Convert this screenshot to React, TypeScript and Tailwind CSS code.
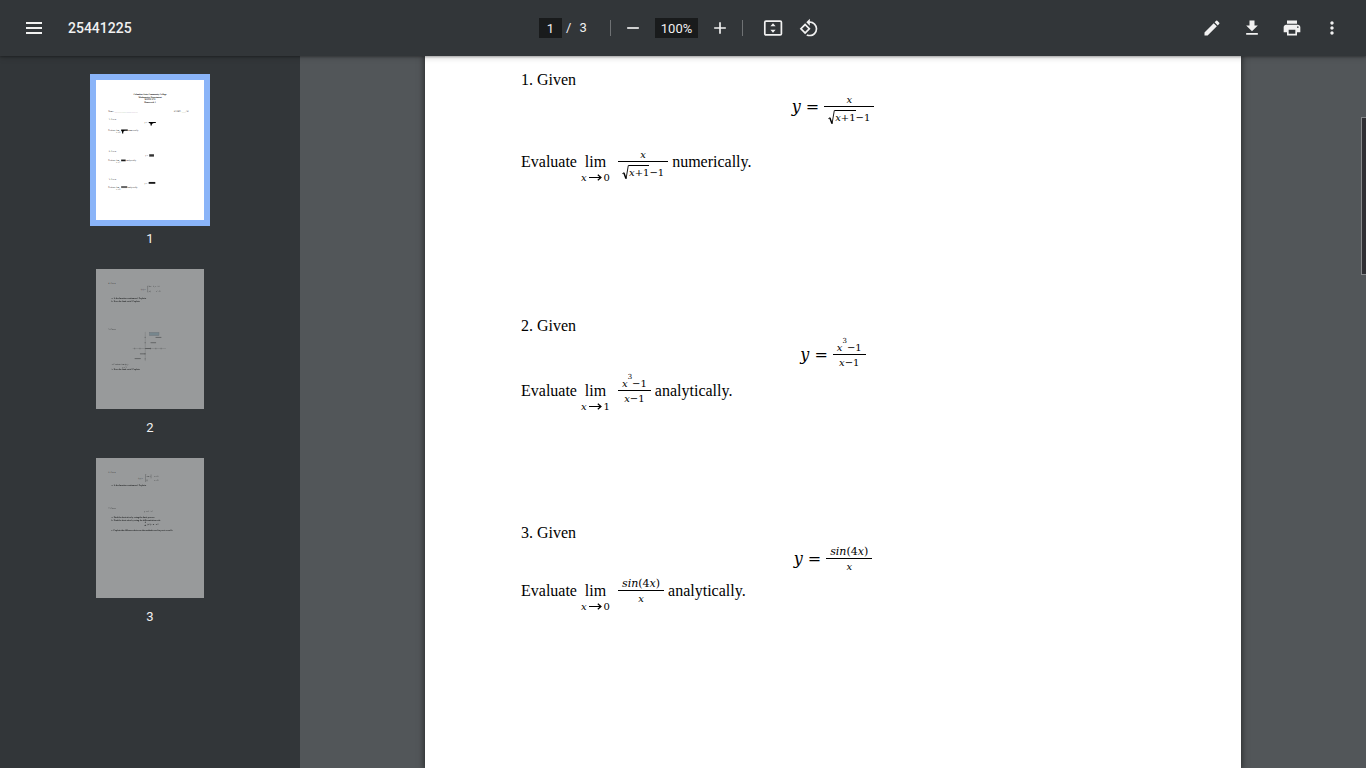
import type { ReactNode } from "react";
import {
  MdAdd,
  MdEdit,
  MdGetApp,
  MdMoreVert,
  MdPrint,
  MdRemove,
  MdRotate90DegreesCcw,
} from "react-icons/md";

function IconButton({ label, children, wide = false }: { label: string; children: ReactNode; wide?: boolean }) {
  return (
    <button
      type="button"
      aria-label={label}
      className={`flex h-8 items-center justify-center rounded-full hover:bg-white/10 ${wide ? "w-9" : "w-8"}`}
    >
      {children}
    </button>
  );
}

function MenuIcon() {
  return (
    <svg width="16" height="12" viewBox="0 0 16 12" fill="currentColor" aria-hidden="true">
      <path d="M0 0h16v2H0zM0 5h16v2H0zM0 10h16v2H0z" />
    </svg>
  );
}

function FitPageIcon() {
  return (
    <svg width="20" height="20" viewBox="0 0 20 20" fill="currentColor" aria-hidden="true">
      <rect x="1.8" y="3.1" width="16.6" height="13.8" rx="1.2" fill="none" stroke="currentColor" strokeWidth="1.7" />
      <path d="M10 5.2l2.6 3H7.4zM10 14.8l2.6-3H7.4z" />
    </svg>
  );
}

function Divider() {
  return <span className="h-4 w-px bg-white/30" />;
}

function Toolbar() {
  return (
    <header className="relative z-10 grid h-14 shrink-0 grid-cols-[1fr_auto_1fr] items-center bg-[#323639] text-sm text-[#f1f1f1] shadow-[0_1px_2px_rgba(0,0,0,0.3),0_2px_6px_rgba(0,0,0,0.15)]">
      <div className="flex items-center gap-4 pl-4">
        <IconButton label="Menu" wide>
          <MenuIcon />
        </IconButton>
        <h1 className="font-medium">25441225</h1>
      </div>

      <div className="flex items-center">
        <input
          aria-label="Page number"
          defaultValue="1"
          className="h-5 w-[23px] bg-[#191b1c] text-center text-[13px] outline-none"
        />
        <span className="flex w-12 gap-2 pl-1 text-[13px]">
          <span>/</span>
          <span>3</span>
        </span>
        <Divider />
        <div className="flex items-center gap-1 px-1">
          <IconButton label="Zoom out" wide>
            <MdRemove size={20} />
          </IconButton>
          <input
            aria-label="Zoom level"
            defaultValue="100%"
            className="h-5 w-[43px] bg-[#191b1c] text-center text-[13px] outline-none"
          />
          <IconButton label="Zoom in" wide>
            <MdAdd size={20} />
          </IconButton>
        </div>
        <Divider />
        <div className="flex items-center pl-3">
          <IconButton label="Fit to page" wide>
            <FitPageIcon />
          </IconButton>
          <IconButton label="Rotate counterclockwise" wide>
            <MdRotate90DegreesCcw size={20} />
          </IconButton>
        </div>
      </div>

      <div className="flex items-center justify-end gap-2 pr-[18px]">
        <IconButton label="Annotate">
          <MdEdit size={20} />
        </IconButton>
        <IconButton label="Download">
          <MdGetApp size={20} />
        </IconButton>
        <IconButton label="Print">
          <MdPrint size={20} />
        </IconButton>
        <IconButton label="More actions">
          <MdMoreVert size={20} />
        </IconButton>
      </div>
    </header>
  );
}

/* Miniature page previews, drawn in letter-size page units. */

function PageOnePreview() {
  return (
    <>
      <g textAnchor="middle" fontWeight="bold">
        <text x="408" y="113">Columbus State Community College</text>
        <text x="408" y="136">Mathematics Department</text>
        <text x="408" y="152">MATH 1151</text>
        <text x="408" y="172">Homework 1</text>
      </g>
      <text x="93" y="241">Name: ______________________</text>
      <text x="587" y="241">SCORE: ____/30</text>
      <text x="96" y="302">1. Given</text>
      <text x="366" y="326">y =</text>
      <path d="M398 316h54v8h-16l-14 8v12h-10v-14l-14-8z" />
      <text x="93" y="385">Evaluate lim</text>
      <text x="152" y="402">x→0</text>
      <path d="M190 373h50v9h-24l-10 8v14h-9v-14l-7-8z" />
      <text x="243" y="385">numerically.</text>
      <text x="96" y="545">2. Given</text>
      <text x="372" y="575">y =</text>
      <path d="M402 560h36v18h-36z" opacity="0.8" />
      <text x="93" y="612">Evaluate lim</text>
      <text x="152" y="629">x→1</text>
      <path d="M190 600h34v13h-34z" opacity="0.9" />
      <text x="228" y="612">analytically.</text>
      <text x="96" y="755">3. Given</text>
      <text x="366" y="782">y =</text>
      <path d="M398 769h50v14h-50z" opacity="0.9" />
      <text x="93" y="815">Evaluate lim</text>
      <text x="152" y="832">x→0</text>
      <path d="M190 800h46v15h-46z" opacity="0.6" />
      <text x="238" y="815">analytically.</text>
    </>
  );
}

function PageTwoPreview() {
  return (
    <>
      <text x="93" y="113">4. Given</text>
      <text x="338" y="156">f(x) =</text>
      <path d="M396 128h-6v46h6" fill="none" stroke="black" strokeWidth="3" opacity="0.6" />
      <text x="398" y="138">2x + 3,   x ≤ 0</text>
      <text x="398" y="172">x², </text>
      <text x="452" y="172">x &gt; 0</text>
      <g fontWeight="bold">
        <text x="118" y="227">a.   Is the function continuous? Explain.</text>
        <text x="118" y="249">b.   Does the limit exist? Explain.</text>
      </g>
      <text x="93" y="461">5. Given</text>
      <rect x="404" y="478" width="72" height="24" fill="#6ba5c0" stroke="#345" strokeWidth="3" opacity="0.45" />
      <path d="M372 474v221M277 600h252" fill="none" stroke="black" strokeWidth="2" opacity="0.5" />
      <path
        d="M292 594v12M332 594v12M412 594v12M452 594v12M492 594v12M366 516h12M366 556h12M366 640h12M366 678h12"
        stroke="black"
        strokeWidth="3"
        opacity="0.6"
      />
      <path d="M292 676h46M332 640h40M372 600h40M412 556h42M450 516h44" stroke="black" strokeWidth="4" opacity="0.8" />
      <text x="118" y="726">a.   Evaluate lim f(x)</text>
      <text x="198" y="744">x→1</text>
      <text x="118" y="763" fontWeight="bold">b.   Does the limit exist? Explain.</text>
    </>
  );
}

function PageThreePreview() {
  return (
    <>
      <text x="93" y="113">6. Given</text>
      <text x="318" y="156">f(x) =</text>
      <path d="M380 124h-6v54h6M416 124v30" fill="none" stroke="black" strokeWidth="3" opacity="0.6" />
      <text x="382" y="144">sin x</text>
      <text x="438" y="144">x ≠ 0</text>
      <text x="382" y="174">0,</text>
      <text x="438" y="174">x = 0</text>
      <text x="118" y="212" fontWeight="bold">a.   Is the function continuous? Explain.</text>
      <text x="93" y="385">7. Given</text>
      <text x="363" y="410">y = x² + x³</text>
      <g fontWeight="bold">
        <text x="118" y="454">a.   Find the derivative by using the limit process.</text>
        <text x="118" y="476">b.   Find the derivative by using the differentiation rule.</text>
        <text x="368" y="494">d</text>
        <text x="364" y="516">dx</text>
        <text x="390" y="504">(xⁿ) = n · xⁿ⁻¹</text>
        <text x="118" y="552">c.   Explain the difference between the methods used in parts a and b.</text>
      </g>
    </>
  );
}

function Thumbnail({ page, active = false, children }: { page: number; active?: boolean; children: ReactNode }) {
  return (
    <li className="flex flex-col items-center">
      <a
        href={`#page-${page}`}
        aria-label={`Page ${page}`}
        className={`block border-6 ${active ? "border-[#8ab4f8]" : "border-transparent"}`}
      >
        <svg
          viewBox="0 0 816 1056"
          preserveAspectRatio="none"
          fontSize="16"
          textRendering="geometricPrecision"
          aria-hidden="true"
          className={`h-[140px] w-[108px] font-['Liberation_Serif',serif] ${active ? "" : "opacity-50"}`}
        >
          <rect width="816" height="1056" fill="white" />
          {children}
        </svg>
      </a>
      <span className="text-[13px] leading-[26px] text-[#f1f1f1]">{page}</span>
    </li>
  );
}

function Sidebar() {
  return (
    <aside className="w-[300px] shrink-0 overflow-hidden bg-[#323639] pt-[18px]">
      <ol className="flex flex-col gap-[11px]">
        <Thumbnail page={1} active>
          <PageOnePreview />
        </Thumbnail>
        <Thumbnail page={2}>
          <PageTwoPreview />
        </Thumbnail>
        <Thumbnail page={3}>
          <PageThreePreview />
        </Thumbnail>
      </ol>
    </aside>
  );
}

/* Worksheet math */

function Fraction({ top, bottom }: { top: ReactNode; bottom: ReactNode }) {
  return (
    <span className="inline-flex flex-col text-center font-['DejaVu_Serif',serif] text-[10px] leading-[14px]">
      <span className="h-[14px] border-b border-black px-1">{top}</span>
      <span className="h-[14px] px-1 leading-4">{bottom}</span>
    </span>
  );
}

function Radical({ children }: { children: ReactNode }) {
  return (
    <span className="inline-flex">
      <svg width="7" height="15" viewBox="0 0 7 15" fill="none" stroke="black" aria-hidden="true">
        <path d="M0.4 8.6L1.9 7.8" strokeWidth="0.9" />
        <path d="M1.8 7.8L4 13.6" strokeWidth="1.5" />
        <path d="M4 14L6.3 0.5H7" strokeWidth="0.9" />
      </svg>
      <span className="border-t border-black leading-[13px]">{children}</span>
    </span>
  );
}

function RootFraction() {
  return (
    <Fraction
      top={<i>x</i>}
      bottom={
        <span className="flex pt-[3px]">
          <Radical>
            <i>x</i>+1
          </Radical>
          <span className="leading-[15px]">−1</span>
        </span>
      }
    />
  );
}

function CubicFraction() {
  return (
    <Fraction
      top={
        <>
          <i>x</i>
          <sup className="-top-2 text-[7px]">3</sup>−1
        </>
      }
      bottom={
        <>
          <i>x</i>−1
        </>
      }
    />
  );
}

function SineFraction() {
  return (
    <Fraction
      top={
        <span className="text-[11px]">
          <i>sin</i>(4<i>x</i>)
        </span>
      }
      bottom={<i>x</i>}
    />
  );
}

function Limit({ to }: { to: number }) {
  return (
    <span className="grid grid-rows-[12px_20px_12px] justify-items-center">
      <span className="row-start-2 leading-5">lim</span>
      <span className="row-start-3 flex items-center gap-0.5 font-['DejaVu_Serif',serif] text-[10px] leading-3">
        <i>x</i>
        <svg width="13" height="8" viewBox="0 0 13 8" fill="none" stroke="black" strokeWidth="1.2" aria-label="approaches">
          <path d="M0 3.5H12M8.8 0.7L12 3.5L8.8 6.3" />
        </svg>
        {to}
      </span>
    </span>
  );
}

type ProblemProps = {
  number: number;
  to: number;
  method: string;
  fraction: ReactNode;
  spacing: string;
};

function Problem({ number, to, method, fraction, spacing }: ProblemProps) {
  return (
    <section className={`flex flex-col ${spacing}`}>
      <p className="leading-5">{number}. Given</p>
      <div className="flex h-7 items-center justify-center gap-[5px]">
        <i className="font-['DejaVu_Serif',serif] leading-5">y</i>
        <span className="font-['DejaVu_Serif',serif] leading-5">=</span>
        {fraction}
      </div>
      <div className="flex h-11 items-center">
        <span>Evaluate</span>
        <span className="pr-2 pl-1">
          <Limit to={to} />
        </span>
        {fraction}
        <span className="pl-1">{method}.</span>
      </div>
    </section>
  );
}

function Worksheet() {
  return (
    <article
      id="page-1"
      className="mx-auto min-h-full w-full max-w-[816px] bg-white px-24 pt-[14px] font-['Liberation_Serif',serif] text-base text-black shadow-[0_0_6px_1px_rgba(0,0,0,0.5)]"
    >
      <Problem
        number={1}
        to={0}
        method="numerically"
        fraction={<RootFraction />}
        spacing="[&>div:first-of-type]:mt-[3px] [&>div:last-of-type]:mt-[19px]"
      />
      <Problem
        number={2}
        to={1}
        method="analytically"
        fraction={<CubicFraction />}
        spacing="mt-[132px] [&>div:first-of-type]:mt-[5px]"
      />
      <Problem
        number={3}
        to={0}
        method="analytically"
        fraction={<SineFraction />}
        spacing="mt-[110px] [&>div:first-of-type]:mt-0.5 [&>div:last-of-type]:-mt-1"
      />
    </article>
  );
}

export default function App() {
  return (
    <div className="flex h-screen flex-col overflow-hidden bg-[#525659] font-[Roboto,sans-serif]">
      <Toolbar />
      <div className="flex min-h-0 flex-1">
        <Sidebar />
        <main className="relative min-w-0 flex-1 overflow-hidden">
          <Worksheet />
          <div className="absolute top-[61px] right-0 h-[158px] w-[5px] border border-r-0 border-[#86888a] bg-[#2f2f33]" />
        </main>
      </div>
    </div>
  );
}
